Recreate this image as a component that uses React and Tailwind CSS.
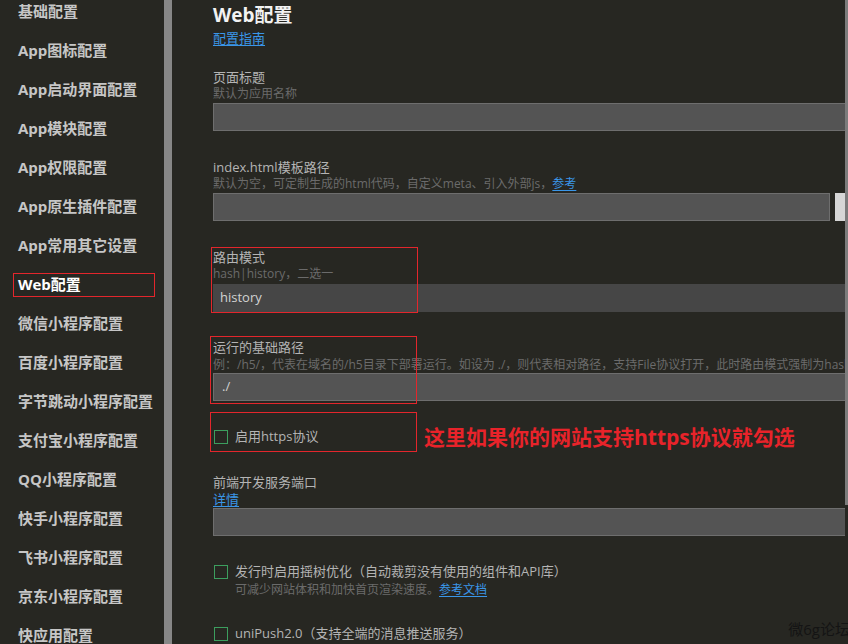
const FONT = { fontFamily: '"Open Sans", "Noto Sans CJK SC", sans-serif' };

const MENU = [
    "基础配置", "App图标配置", "App启动界面配置", "App模块配置", "App权限配置",
    "App原生插件配置", "App常用其它设置", "Web配置", "微信小程序配置", "百度小程序配置",
    "字节跳动小程序配置", "支付宝小程序配置", "QQ小程序配置", "快手小程序配置",
    "飞书小程序配置", "京东小程序配置", "快应用配置",
];

function Label({ children }) {
    return <div className="text-[13px] leading-[18px] text-[#b4b4b4]">{children}</div>;
}

function Desc({ children }) {
    return <div className="text-[12px] leading-[16px] text-[#6b6b6b] whitespace-nowrap">{children}</div>;
}

function Link({ children }) {
    return <span className="text-[#3a96e8] underline underline-offset-2 cursor-pointer">{children}</span>;
}

function Input({ value, dark, className = "" }) {
    return (
        <div className={`h-[28px] flex items-center pl-[7px] text-[13px] text-[#d2d2d2] ${dark ? "bg-[#464646]" : "bg-[#545454] border border-[#6e6e6e]"} ${className}`}>
            {value}
        </div>
    );
}

function Check({ children }) {
    return (
        <div className="flex items-center h-[20px]">
            <span className="w-[14px] h-[14px] border border-[#3c9e5e] shrink-0 ml-px" />
            <span className="ml-[7px] text-[13px] text-[#b4b4b4] whitespace-nowrap">{children}</span>
        </div>
    );
}

const Mark = ({ className }) => <div className={`absolute border border-[#e3262c] pointer-events-none ${className}`} />;

export default function App() {
    return (
        <div className="w-[848px] h-[644px] overflow-hidden flex bg-[#272722] relative" style={FONT}>
            {/* 左侧菜单 */}
            <div className="w-[164px] shrink-0">
                <div className="-mt-[8px]">
                    {MENU.map(m => m === "Web配置" ? (
                        <div key={m} className="h-[39px] flex items-center">
                            <div className="ml-[13px] w-[142px] h-[24px] border border-[#e3262c] pl-[4px] flex items-center text-[15px] font-bold text-white">{m}</div>
                        </div>
                    ) : (
                        <div key={m} className="h-[39px] flex items-center pl-[18px] text-[15px] font-bold text-[#c6c6c6] whitespace-nowrap">{m}</div>
                    ))}
                </div>
            </div>
            <div className="w-[8px] shrink-0 bg-[#878787]" />

            {/* 主体 */}
            <div className="flex-1 overflow-hidden pl-[41px]">
                <div className="w-[700px]">
                    <div className="mt-[3px] text-[19px] leading-[24px] font-bold text-[#f2f2f2]">Web配置</div>
                    <div className="mt-[3px] text-[13px] leading-[16px]"><Link>配置指南</Link></div>

                    <div className="mt-[22px]">
                        <Label>页面标题</Label>
                        <Desc>默认为应用名称</Desc>
                        <Input className="mt-px" />
                    </div>

                    <div className="mt-[27px]">
                        <Label>index.html模板路径</Label>
                        <Desc>默认为空，可定制生成的html代码，自定义meta、引入外部js，<Link>参考</Link></Desc>
                        <div className="mt-px flex">
                            <Input className="w-[617px]" />
                            <div className="ml-[5px] w-[60px] h-[28px] bg-[#d6d6d6]" />
                        </div>
                    </div>

                    <div className="mt-[27px] relative">
                        <Mark className="-left-[2px] -top-px w-[207px] h-[66px]" />
                        <Label>路由模式</Label>
                        <Desc>hash|history，二选一</Desc>
                        <Input dark value="history" className="mt-[2px] pl-[6px]" />
                    </div>

                    <div className="mt-[26px] relative">
                        <Mark className="-left-[3px] -top-[2px] w-[207px] h-[68px]" />
                        <Label>运行的基础路径</Label>
                        <div className="mt-px"><Desc>例：/h5/，代表在域名的/h5目录下部署运行。如设为 ./，则代表相对路径，支持File协议打开，此时路由模式强制为hash</Desc></div>
                        <Input value="./" className="pl-[8px]" />
                    </div>

                    <div className="mt-[26px] relative flex items-center">
                        <Mark className="-left-[3px] -top-[15px] w-[207px] h-[40px]" />
                        <div className="w-[211px] shrink-0"><Check>启用https协议</Check></div>
                        <div className="text-[21px] leading-[20px] font-bold text-[#e8232a] whitespace-nowrap">这里如果你的网站支持https协议就勾选</div>
                    </div>

                    <div className="mt-[26px]">
                        <Label>前端开发服务端口</Label>
                        <div className="text-[13px] leading-[17px]"><Link>详情</Link></div>
                        <Input />
                    </div>

                    <div className="mt-[26px]">
                        <Check>发行时启用摇树优化（自动裁剪没有使用的组件和API库）</Check>
                        <div className="pl-[22px]"><Desc>可减少网站体积和加快首页渲染速度。<Link>参考文档</Link></Desc></div>
                    </div>

                    <div className="mt-[26px]">
                        <Check>uniPush2.0（支持全端的消息推送服务）</Check>
                    </div>
                </div>
            </div>

            {/* 右侧滚动条 */}
            <div className="w-[3px] shrink-0">
                <div className="h-[505px] bg-[#7c7c7c]" />
            </div>

            <div className="absolute right-[-2px] bottom-[4px] text-[15px] text-[#141414] whitespace-nowrap">微6g论坛</div>
        </div>
    );
}
